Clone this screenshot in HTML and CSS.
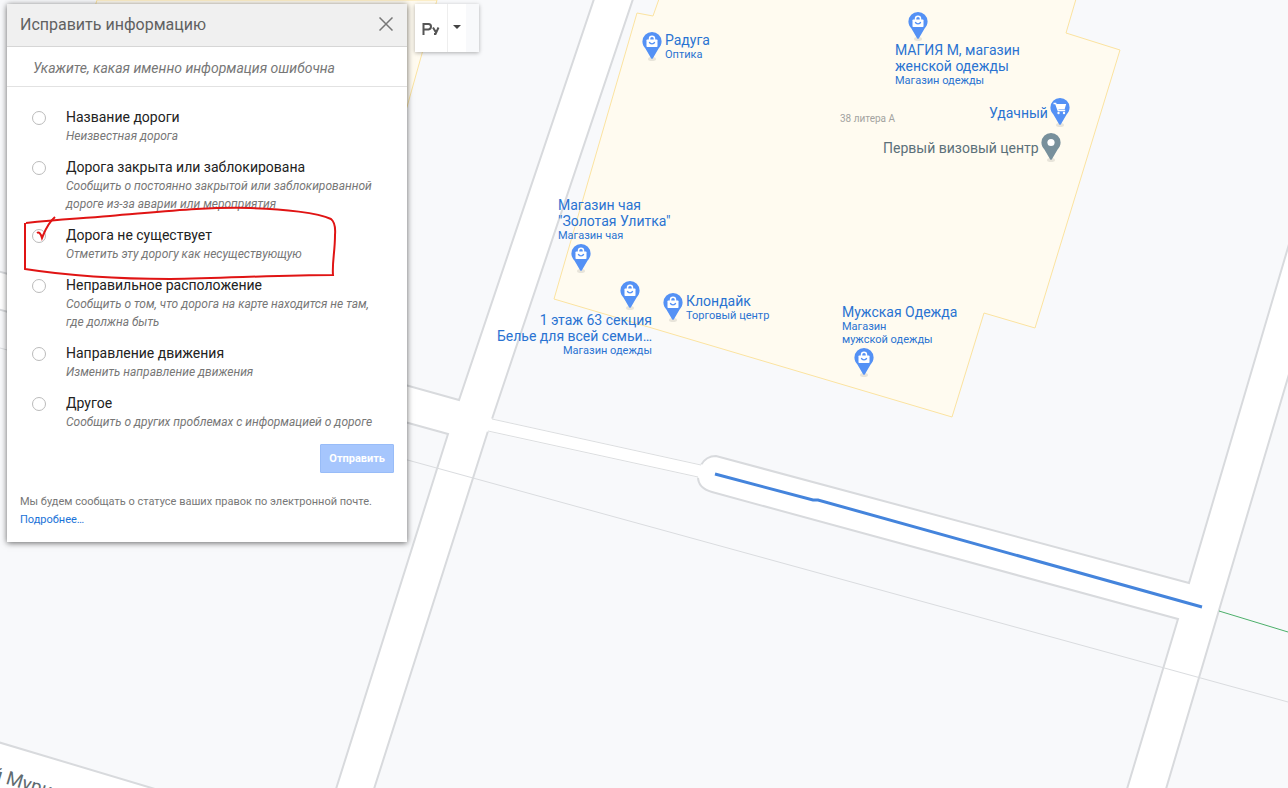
FILE: index.html
```html
<!DOCTYPE html>
<html lang="ru">
<head>
    <meta charset="UTF-8">
    <meta name="viewport" content="width=device-width, initial-scale=1.0">
    <title>Исправить информацию</title>
    <link rel="stylesheet" href="styles.css">
</head>
<body>
    <!-- shared pin icons -->
    <svg class="sprite" aria-hidden="true">
        <symbol id="pin-body" viewBox="0 0 20 30">
            <ellipse cx="10" cy="27" rx="4" ry="2" fill="#d9d6cc" opacity="0.6"/>
            <path d="M10 0a9.600 9.600 0 0 0-9.600 9.600c0 3 1.400 5 3 7l5.700 9.600q0.900 1.300 1.800 0l5.700-9.600c1.600-2 3-4 3-7a9.600 9.600 0 0 0-9.600-9.600z" fill="currentColor"/>
        </symbol>
        <symbol id="pin-bag" viewBox="0 0 20 30">
            <use href="#pin-body"/>
            <path d="M7.500 8V6.700a2.500 2.500 0 0 1 5 0v1.300" fill="none" stroke="#fff" stroke-width="1.500"/>
            <rect x="4.500" y="7.500" width="11" height="7.500" rx="0.800" fill="#fff"/>
            <path d="M7.300 10a2.800 2.500 0 0 0 5.400 0" fill="none" stroke="currentColor" stroke-width="1.300"/>
        </symbol>
        <symbol id="pin-cart" viewBox="0 0 20 30">
            <use href="#pin-body"/>
            <path d="M3.500 5.500h2.200l2.500 7h7" fill="none" stroke="#fff" stroke-width="1.300"/>
            <path d="M6 6h10.200l-1.600 5.200H7.800z" fill="#fff"/>
            <circle cx="8.500" cy="15" r="1.200" fill="#fff"/>
            <circle cx="14" cy="15" r="1.200" fill="#fff"/>
        </symbol>
        <symbol id="pin-dot" viewBox="0 0 20 30">
            <use href="#pin-body"/>
            <circle cx="10" cy="9.500" r="3.600" fill="#fff"/>
        </symbol>
    </svg>

    <main class="map">
        <svg class="map-canvas" aria-hidden="true">
            <!-- buildings -->
            <path class="building" d="M97 0L20 260H346L407 107L437 0z"/>
            <path class="building" d="M659 -1L653 16L637 13L554 299L952 417L984 313L1035 328L1120 50L1066 33L1076 -1z"/>

            <!-- roads -->
            <path class="road" d="M-10 269L459 400L594 -1H633L492 419L488 431L374 789H336L448 434L-10 307z"/>
            <path class="road" d="M701 465Q706 456 716 456L1189 583L1292 234V364L1166 789H1127L1178 619L712 492Q698 488 698 477z"/>
            <path class="road-fill" d="M485 417L704 465V479L480 430z"/>
            <path class="lane" d="M492 419L701 465M488 431L698 477"/>
            <path class="road" d="M-2 742L155 789H-2z"/>
            <path class="thin" d="M0 348L1288 702"/>

            <path class="transit" d="M1219 611L1288 632"/>
            <path class="selected" d="M715 474L813 500H818L1202 607"/>

            <text class="street" transform="translate(-10 779) rotate(17)">й Мурин</text>
        </svg>

        <div class="pin pin-right raduga">
            <svg class="pin-icon"><use href="#pin-bag"/></svg>
            <p class="pin-text">Радуга<small>Оптика</small></p>
        </div>
        <div class="pin pin-below magia">
            <svg class="pin-icon"><use href="#pin-bag"/></svg>
            <p class="pin-text">МАГИЯ М, магазин<br>женской одежды<small>Магазин одежды</small></p>
        </div>
        <div class="pin pin-right udachny">
            <p class="pin-text">Удачный</p>
            <svg class="pin-icon"><use href="#pin-cart"/></svg>
        </div>
        <div class="pin pin-right pin-gray visa">
            <p class="pin-text">Первый визовый центр</p>
            <svg class="pin-icon"><use href="#pin-dot"/></svg>
        </div>
        <div class="pin pin-above tea">
            <p class="pin-text">Магазин чая<br>"Золотая Улитка"<small>Магазин чая</small></p>
            <svg class="pin-icon"><use href="#pin-bag"/></svg>
        </div>
        <div class="pin pin-below section63">
            <svg class="pin-icon"><use href="#pin-bag"/></svg>
            <p class="pin-text">1 этаж 63 секция<br>Белье для всей семьи…<small>Магазин одежды</small></p>
        </div>
        <div class="pin pin-right klondike">
            <svg class="pin-icon"><use href="#pin-bag"/></svg>
            <p class="pin-text">Клондайк<small>Торговый центр</small></p>
        </div>
        <div class="pin pin-above menswear">
            <p class="pin-text">Мужская Одежда<small>Магазин<br>мужской одежды</small></p>
            <svg class="pin-icon"><use href="#pin-bag"/></svg>
        </div>
        <span class="house">38 литера А</span>
    </main>

    <!-- report form -->
    <form class="panel">
        <header class="panel-header">
            <h1>Исправить информацию</h1>
            <button type="button" class="close" aria-label="Закрыть">
                <svg width="14" height="14" viewBox="0 0 14 14"><path d="M0.500 0.500l13 13M13.500 0.500l-13 13" stroke="#777" stroke-width="1.500"/></svg>
            </button>
        </header>
        <p class="hint">Укажите, какая именно информация ошибочна</p>
        <div class="options">
            <label class="option">
                <input type="radio" name="issue">
                <span>Название дороги<em>Неизвестная дорога</em></span>
            </label>
            <label class="option">
                <input type="radio" name="issue">
                <span>Дорога закрыта или заблокирована<em>Сообщить о постоянно закрытой или заблокированной дороге из-за аварии или мероприятия</em></span>
            </label>
            <label class="option">
                <input type="radio" name="issue">
                <span>Дорога не существует<em>Отметить эту дорогу как несуществующую</em></span>
            </label>
            <label class="option">
                <input type="radio" name="issue">
                <span>Неправильное расположение<em>Сообщить о том, что дорога на карте находится не там, где должна быть</em></span>
            </label>
            <label class="option">
                <input type="radio" name="issue">
                <span>Направление движения<em>Изменить направление движения</em></span>
            </label>
            <label class="option">
                <input type="radio" name="issue">
                <span>Другое<em>Сообщить о других проблемах с информацией о дороге</em></span>
            </label>
        </div>
        <div class="actions">
            <button type="submit" class="submit" disabled>Отправить</button>
        </div>
        <p class="note">Мы будем сообщать о статусе ваших правок по электронной почте. <a href="#">Подробнее…</a></p>
    </form>

    <!-- input language -->
    <div class="lang">
        <button type="button" class="lang-key" aria-label="Русская клавиатура">
            <svg width="18" height="14" viewBox="0 0 18 14"><path d="M1.500 13V2h5q2.500 0 2.500 2.500T6.500 7.500h-5M11 5.500l3 5M16.500 5.500L13.500 12h-1.500" fill="none" stroke="#555" stroke-width="2"/></svg>
        </button>
        <button type="button" class="lang-menu" aria-label="Выбрать язык">
            <svg width="8" height="4" viewBox="0 0 8 4"><path d="M0 0h8L4 4z" fill="#444"/></svg>
        </button>
    </div>

    <!-- hand-drawn mark -->
    <svg class="marker" aria-hidden="true">
        <path d="M26 223C60 219 75 219 110 216C170 211 205 207 250 208C285 209 318 213 331 219Q336 223 335 235C335 252 332 262 333 275C280 275 230 278 170 279C110 279 70 276 25 269V223"/>
        <path d="M37 233q3-2 5 5c3-7 5-14 13-21"/>
    </svg>
</body>
</html>
```

FILE: styles.css
```css
* {
    box-sizing: border-box;
}

body {
    margin: 0;
    min-height: 100vh;
    overflow: hidden;
    background: #f8f9fb;
    font-family: Roboto, sans-serif;
}

p, h1 {
    margin: 0;
}

button {
    padding: 0;
    border: 0;
    background: none;
    font-family: inherit;
}

.sprite {
    position: absolute;
    width: 0;
    height: 0;
}

/* map */
.map {
    position: absolute;
    inset: 0;
    overflow: hidden;
}

.map-canvas {
    display: block;
    width: 100%;
    height: 100%;
}

.building {
    fill: #fffbf0;
    stroke: #fbe3a0;
}

.road {
    fill: #fff;
    stroke: #d8dadd;
    stroke-width: 2;
}

.road-fill {
    fill: #fff;
}

.lane {
    stroke: #dcdee0;
}

.thin {
    stroke: #dadcdf;
}

.transit {
    stroke: #4caf6a;
}

.selected {
    fill: none;
    stroke: #4484dc;
    stroke-width: 3;
}

.street {
    fill: #5f6b70;
    font-size: 19px;
}

.pin {
    position: absolute;
    display: flex;
    color: #5491f5;
}

.pin-icon {
    flex: none;
    width: 20px;
    height: 30px;
}

.pin-text {
    color: #2a73d2;
    font-size: 14px;
    line-height: 16px;
    white-space: nowrap;
}

.pin-text small {
    display: block;
    font-size: 11px;
    line-height: 13px;
}

.pin-right {
    gap: 3px;
}

.pin-below,
.pin-above {
    flex-direction: column;
}

.pin-gray {
    color: #78909c;
}

.pin-gray .pin-text {
    color: #5b7079;
}

.raduga {
    left: 642px;
    top: 32px;
}

.magia {
    left: 895px;
    top: 12px;
}

.magia .pin-icon {
    margin-left: 13px;
}

.udachny {
    left: 989px;
    top: 98px;
}

.visa {
    left: 883px;
    top: 133px;
}

.udachny,
.visa {
    gap: 2px;
}

.udachny .pin-text,
.visa .pin-text {
    padding-top: 7px;
}

.tea {
    left: 558px;
    top: 197px;
}

.tea .pin-icon {
    margin: 2px 0 0 13px;
}

.section63 {
    left: 497px;
    top: 281px;
    text-align: right;
}

.section63 .pin-icon {
    margin: 0 12px 1px 0;
    align-self: flex-end;
}

.klondike {
    left: 663px;
    top: 293px;
}

.menswear {
    left: 842px;
    top: 304px;
}

.menswear .pin-icon {
    margin: 2px 0 0 12px;
}

.house {
    position: absolute;
    left: 840px;
    top: 113px;
    color: #a3a3a0;
    font-size: 10px;
    line-height: 12px;
}

/* report form */
.panel {
    position: absolute;
    left: 7px;
    top: 4px;
    width: 400px;
    background: #fff;
    box-shadow: 0 1px 6px rgba(0, 0, 0, 0.6);
}

.panel-header {
    display: flex;
    justify-content: space-between;
    align-items: center;
    height: 43px;
    padding: 0 14px 2px 13px;
    background: #f0f0f0;
    border-bottom: 1px solid #d6d6d6;
}

.panel-header h1 {
    color: #616161;
    font-size: 16px;
    font-weight: 400;
}

.close {
    display: flex;
}

.hint {
    padding: 11px 26px 8px;
    border-bottom: 1px solid #e2e2e2;
    color: #777;
    font-size: 14px;
    font-style: italic;
    line-height: 20px;
}

.options {
    display: flex;
    flex-direction: column;
    gap: 13px;
    padding: 21px 22px 0 25px;
}

.option {
    display: flex;
    gap: 20px;
    color: #222;
    font-size: 14px;
    line-height: 18px;
}

.option input {
    appearance: none;
    flex: none;
    width: 14px;
    height: 14px;
    margin: 3px 0 0;
    border: 1px solid #bbb;
    border-radius: 50%;
    background: #fff;
}

.option input:checked {
    border: 4px solid #4285f4;
}

.option em {
    display: block;
    padding-top: 1px;
    color: #777;
    font-size: 12px;
}

.actions {
    display: flex;
    justify-content: flex-end;
    padding: 13px 13px 0;
}

.submit {
    height: 29px;
    padding: 0 8px;
    border: 1px solid #98bcf8;
    border-radius: 1px;
    background: #a6c6fd;
    color: #fff;
    font-size: 11px;
    font-weight: 700;
}

.note {
    padding: 20px 13px 13px;
    color: #777;
    font-size: 11px;
    line-height: 18px;
}

.note a {
    display: block;
    color: #1a73d8;
    text-decoration: none;
}

/* input language */
.lang {
    position: absolute;
    left: 415px;
    top: 4px;
    display: flex;
    width: 64px;
    height: 48px;
    background: #f8f9fb;
    box-shadow: 0 1px 4px rgba(0, 0, 0, 0.3);
}

.lang-key,
.lang-menu {
    display: flex;
    justify-content: center;
    align-items: center;
    background: #fff;
}

.lang-key {
    width: 33px;
    padding-top: 2px;
    border-right: 1px solid #eee;
}

.lang-menu {
    width: 18px;
    padding-bottom: 2px;
}

.marker {
    position: absolute;
    left: 0;
    top: 0;
    width: 340px;
    height: 290px;
    fill: none;
    stroke: #e01414;
    stroke-width: 2;
    pointer-events: none;
}
```
